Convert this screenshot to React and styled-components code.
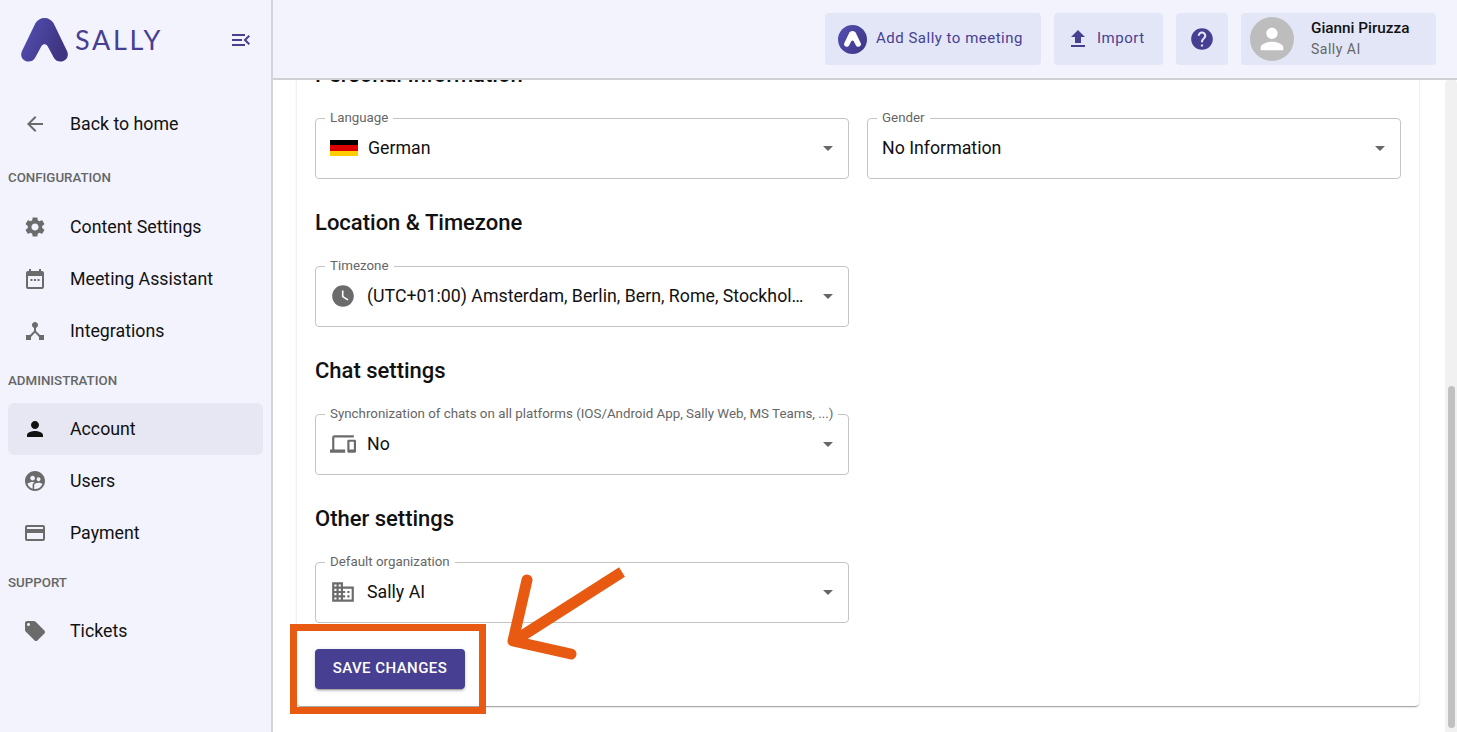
import styled, { createGlobalStyle } from "styled-components";
import {
  MdArrowBack,
  MdMenuOpen,
  MdSettings,
  MdDeviceHub,
  MdPerson,
  MdSupervisedUserCircle,
  MdCreditCard,
  MdLocalOffer,
  MdFileUpload,
  MdHelp,
  MdWatchLater,
  MdOutlineDevices,
  MdOutlineDomain,
} from "react-icons/md";

const GlobalStyle = createGlobalStyle`
  html, body {
    margin: 0;
    height: 100%;
    font-family: Roboto, "Liberation Sans", sans-serif;
    background: #fff;
    overflow: hidden;
  }
  #root {
    height: 100%;
  }
`;

const Shell = styled.div`
  display: flex;
  position: relative;
  height: 100vh;
  overflow: hidden;
`;

const Sidebar = styled.aside`
  width: 273px;
  flex-shrink: 0;
  box-sizing: border-box;
  background: #f2f3fc;
  border-right: 2px solid #d4d4d8;
  padding-right: 8px;
`;

const Brand = styled.div`
  display: flex;
  align-items: center;
  height: 79px;
  margin-bottom: 19px;
  padding-left: 21px;
  color: #473f92;
`;

const BrandName = styled.span`
  margin-left: 7px;
  font-family: Lato, Roboto, sans-serif;
  font-size: 27px;
  letter-spacing: 2.7px;
  line-height: 1;
`;

const CollapseIcon = styled(MdMenuOpen)`
  margin-left: auto;
  margin-right: 10px;
  font-size: 24px;
`;

const SectionLabel = styled.div`
  display: flex;
  align-items: center;
  height: ${({ $height }) => $height || 46}px;
  padding: ${({ $first }) => ($first ? "3px" : "0")} 0 0 8px;
  box-sizing: border-box;
  color: #666;
  font-size: 13.3px;
  font-weight: 500;
`;

const NavRow = styled.div`
  display: flex;
  align-items: center;
  gap: 23px;
  height: 52px;
  box-sizing: border-box;
  margin-left: 8px;
  padding: 0 0 1px 15px;
  border-radius: 6px;
  background: ${({ $active }) => ($active ? "#e6e7f3" : "transparent")};
  color: #111;
  font-size: 17.75px;

  svg {
    width: 24px;
    height: 24px;
    flex-shrink: 0;
    color: ${({ $active }) => ($active ? "#111" : "#6b6b6b")};
  }
`;

const Main = styled.div`
  flex: 1;
  min-width: 0;
  display: flex;
  flex-direction: column;
`;

const TopBar = styled.header`
  position: relative;
  z-index: 1;
  display: flex;
  justify-content: flex-end;
  align-items: center;
  gap: 13px;
  height: 80px;
  flex-shrink: 0;
  box-sizing: border-box;
  padding-right: 21px;
  background: #f2f3fc;
  border-bottom: 2px solid #cfcfd4;
`;

const TopButton = styled.div`
  display: flex;
  align-items: center;
  gap: ${({ $gap }) => $gap || 0}px;
  width: ${({ $width }) => $width}px;
  height: 52px;
  box-sizing: border-box;
  padding-left: ${({ $pad }) => $pad}px;
  border-radius: 4px;
  background: #e3e6f7;
  color: #473f92;
  font-size: 15px;
  letter-spacing: 0.5px;
`;

const TopLabel = styled.span`
  margin-bottom: 2px;
`;

const MeetingBadge = styled.span`
  display: flex;
  align-items: center;
  justify-content: center;
  width: 29px;
  height: 29px;
  border-radius: 50%;
  background: linear-gradient(120deg, #5450b4, #3f3583);
`;

const Avatar = styled.span`
  display: flex;
  align-items: center;
  justify-content: center;
  width: 44px;
  height: 44px;
  border-radius: 50%;
  background: #bdbdbd;
  color: #fff;
  font-size: 34px;
`;

const UserInfo = styled.div`
  display: flex;
  flex-direction: column;
  gap: 4px;
  margin-bottom: 2px;
  letter-spacing: 0;
`;

const UserName = styled.span`
  color: #111;
  font-size: 15.3px;
  font-weight: 500;
`;

const UserOrg = styled.span`
  color: #666;
  font-size: 14px;
  letter-spacing: 0.5px;
`;

const Body = styled.div`
  flex: 1;
  min-height: 0;
  display: flex;
`;

const Pane = styled.main`
  flex: 1;
  min-width: 0;
  display: flex;
  flex-direction: column;
  justify-content: flex-end;
  overflow: hidden;
  padding: 0 26px 26px 24px;
`;

const Card = styled.section`
  flex-shrink: 0;
  padding: 0 18px 17px;
  border-radius: 0 0 4px 4px;
  background: #fff;
  box-shadow: 0 2px 1px -1px rgba(0, 0, 0, 0.2), 0 1px 1px rgba(0, 0, 0, 0.14),
    0 1px 3px rgba(0, 0, 0, 0.12);
`;

const Heading = styled.h2`
  margin: 28px 0 27px;
  color: #111;
  font-size: 22px;
  font-weight: 500;
  line-height: 32px;
`;

const FieldRow = styled.div`
  display: grid;
  grid-template-columns: minmax(0, 1fr) minmax(0, 1fr);
  gap: 18px;
`;

const Field = styled.div`
  position: relative;
  display: flex;
  align-items: center;
  gap: ${({ $gap }) => $gap || 11}px;
  height: 61px;
  box-sizing: border-box;
  padding: 0 36px 2px 14px;
  border: 1px solid #c4c4c4;
  border-radius: 4px;
  color: #111;
  font-size: 17.75px;

  svg {
    flex-shrink: 0;
    color: #6b6b6b;
  }
`;

const FieldLabel = styled.label`
  position: absolute;
  top: -9px;
  left: 9px;
  padding: 0 5px;
  background: #fff;
  color: #666;
  font-size: 13.33px;
  line-height: 16px;
  white-space: nowrap;
`;

const FieldValue = styled.span`
  min-width: 0;
  overflow: hidden;
  text-overflow: ellipsis;
  white-space: nowrap;
`;

const Caret = styled.span`
  position: absolute;
  top: 27px;
  right: 15px;
  border-style: solid;
  border-width: 5px 5.5px 0;
  border-color: #666 transparent transparent;
`;

const Flag = styled.span`
  width: 28px;
  height: 16px;
  flex-shrink: 0;
  background: linear-gradient(#000 33.3%, #dd0000 33.3% 66.6%, #ffce00 66.6%);
`;

const SaveButton = styled.button`
  display: block;
  width: 150px;
  height: 40px;
  margin-top: 26px;
  padding: 0 0 2px;
  border: 0;
  border-radius: 4px;
  background: #473f92;
  color: #fff;
  font-family: inherit;
  font-size: 15px;
  font-weight: 500;
  letter-spacing: 0.45px;
  box-shadow: 0 3px 1px -2px rgba(0, 0, 0, 0.2), 0 2px 2px rgba(0, 0, 0, 0.14),
    0 1px 5px rgba(0, 0, 0, 0.12);
`;

const ScrollTrack = styled.div`
  display: flex;
  flex-direction: column;
  justify-content: flex-end;
  width: 12px;
  flex-shrink: 0;
  box-sizing: border-box;
  padding: 0 2px 4px 3px;
  border-radius: 4px 4px 0 0;
  background: #f1f1f1;
`;

const ScrollThumb = styled.div`
  height: 342px;
  border-radius: 4px;
  background: #c1c1c1;
`;

const Highlight = styled.div`
  position: absolute;
  left: 290px;
  top: 624px;
  width: 196px;
  height: 90px;
  box-sizing: border-box;
  border: 7px solid #e85a12;
  z-index: 2;
`;

const Pointer = styled.svg`
  position: absolute;
  left: 500px;
  top: 560px;
  z-index: 2;
`;

const SallyMark = ({ width = 47, color }) => (
  <svg width={width} height={(width * 44) / 47} viewBox="0 0 47 44">
    <defs>
      <linearGradient id="sallyMark" x1="0" y1="0" x2="1" y2="0.4">
        <stop offset="0" stopColor="#5551b6" />
        <stop offset="1" stopColor="#3e3481" />
      </linearGradient>
    </defs>
    <path
      fill={color || "url(#sallyMark)"}
      d="M14.5 5C16.5 2 19.5 0 23.5 0s7 2 9 5L46 33c2.500 5-1 10.500-6.500 10.500-3 0-5-1-6.500-3.500l-6.500-12c-1.500-2.500-4.500-2.500-6 0L14 40c-1.500 2.500-3.500 3.500-6.500 3.500C2 43.500-1.500 38 1 33z"
    />
  </svg>
);

const CalendarIcon = () => (
  <svg viewBox="0 0 24 24" fill="currentColor">
    <path d="M19 4h-1V2h-2v2H8V2H6v2H5c-1.100 0-2 .9-2 2v14c0 1.100.9 2 2 2h14c1.100 0 2-.9 2-2V6c0-1.100-.9-2-2-2zm0 16H5V9h14v11z" />
    <path d="M7.500 12h2v2h-2zM11 12h2v2h-2zM14.500 12h2v2h-2z" />
  </svg>
);

const NAV = [
  { label: "Content Settings", icon: <MdSettings /> },
  { label: "Meeting Assistant", icon: <CalendarIcon /> },
  { label: "Integrations", icon: <MdDeviceHub /> },
];

const ADMIN = [
  { label: "Account", icon: <MdPerson />, active: true },
  { label: "Users", icon: <MdSupervisedUserCircle /> },
  { label: "Payment", icon: <MdCreditCard /> },
];

const App = () => (
  <Shell>
    <GlobalStyle />
    <Sidebar>
      <Brand>
        <SallyMark />
        <BrandName>SALLY</BrandName>
        <CollapseIcon />
      </Brand>
      <NavRow>
        <MdArrowBack />
        Back to home
      </NavRow>
      <SectionLabel $first $height={51}>
        CONFIGURATION
      </SectionLabel>
      {NAV.map(({ label, icon }) => (
        <NavRow key={label}>
          {icon}
          {label}
        </NavRow>
      ))}
      <SectionLabel>ADMINISTRATION</SectionLabel>
      {ADMIN.map(({ label, icon, active }) => (
        <NavRow key={label} $active={active}>
          {icon}
          {label}
        </NavRow>
      ))}
      <SectionLabel>SUPPORT</SectionLabel>
      <NavRow>
        <MdLocalOffer />
        Tickets
      </NavRow>
    </Sidebar>

    <Main>
      <TopBar>
        <TopButton $width={216} $pad={13} $gap={9}>
          <MeetingBadge>
            <SallyMark width={17} color="#fff" />
          </MeetingBadge>
          <TopLabel>Add Sally to meeting</TopLabel>
        </TopButton>
        <TopButton $width={109} $pad={12} $gap={7}>
          <MdFileUpload size={24} />
          <TopLabel>Import</TopLabel>
        </TopButton>
        <TopButton $width={52} $pad={13}>
          <MdHelp size={26} />
        </TopButton>
        <TopButton $width={195} $pad={9} $gap={17}>
          <Avatar>
            <MdPerson />
          </Avatar>
          <UserInfo>
            <UserName>Gianni Piruzza</UserName>
            <UserOrg>Sally AI</UserOrg>
          </UserInfo>
        </TopButton>
      </TopBar>

      <Body>
        <Pane>
          <Card>
            <Heading>Personal Information</Heading>
            <FieldRow>
              <Field $gap={10}>
                <FieldLabel>Language</FieldLabel>
                <Flag />
                <FieldValue>German</FieldValue>
                <Caret />
              </Field>
              <Field>
                <FieldLabel>Gender</FieldLabel>
                <FieldValue>No Information</FieldValue>
                <Caret />
              </Field>
            </FieldRow>

            <Heading>Location &amp; Timezone</Heading>
            <FieldRow>
              <Field>
                <FieldLabel>Timezone</FieldLabel>
                <MdWatchLater size={26} />
                <FieldValue>
                  (UTC+01:00) Amsterdam, Berlin, Bern, Rome, Stockholm, Vienna
                </FieldValue>
                <Caret />
              </Field>
            </FieldRow>

            <Heading>Chat settings</Heading>
            <FieldRow>
              <Field>
                <FieldLabel>
                  Synchronization of chats on all platforms (IOS/Android App,
                  Sally Web, MS Teams, ...)
                </FieldLabel>
                <MdOutlineDevices size={26} />
                <FieldValue>No</FieldValue>
                <Caret />
              </Field>
            </FieldRow>

            <Heading>Other settings</Heading>
            <FieldRow>
              <Field>
                <FieldLabel>Default organization</FieldLabel>
                <MdOutlineDomain size={26} />
                <FieldValue>Sally AI</FieldValue>
                <Caret />
              </Field>
            </FieldRow>

            <SaveButton>SAVE CHANGES</SaveButton>
          </Card>
        </Pane>
        <ScrollTrack>
          <ScrollThumb />
        </ScrollTrack>
      </Body>
    </Main>

    <Highlight />
    <Pointer width="135" height="105" viewBox="0 0 135 105">
      <path d="M122 12 L14 81" fill="none" stroke="#e85a12" strokeWidth="11" />
      <path
        d="M27 20 L13 81 L71 94"
        fill="none"
        stroke="#e85a12"
        strokeWidth="11"
        strokeLinecap="round"
        strokeLinejoin="round"
      />
    </Pointer>
  </Shell>
);

export default App;
